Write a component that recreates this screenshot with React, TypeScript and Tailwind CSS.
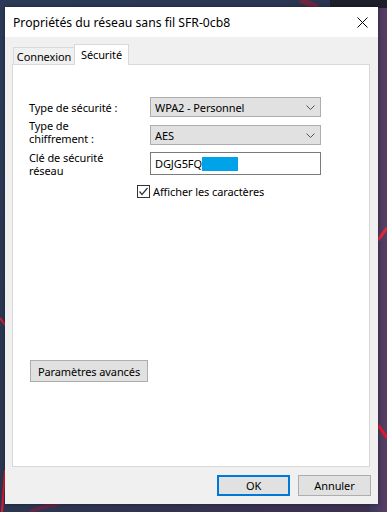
import React from 'react'

const font = { fontFamily: '"Noto Sans", "Liberation Sans", sans-serif' }

function Chevron() {
  return (
    <svg width="9" height="5" viewBox="0 0 9 5" className="text-[#555]">
      <polyline points="0.5,0.5 4.5,4.5 8.5,0.5" fill="none" stroke="currentColor" strokeWidth="1" />
    </svg>
  )
}

function Select({ value }: { value: string }) {
  return (
    <div className="flex h-[20px] w-[171px] items-center justify-between border border-[#adadad] bg-[#e1e1e1] pl-[4px] pr-[5px]">
      <span>{value}</span>
      <Chevron />
    </div>
  )
}

function Backdrop() {
  return (
    <svg className="absolute inset-0" width="387" height="512" viewBox="0 0 387 512">
      <defs>
        <linearGradient id="bg" x1="0" y1="0" x2="1" y2="1">
          <stop offset="0" stopColor="#2b3b57" />
          <stop offset="0.5" stopColor="#2a3550" />
          <stop offset="1" stopColor="#3f3050" />
        </linearGradient>
        <linearGradient id="rs" x1="0" y1="0" x2="1" y2="0">
          <stop offset="0" stopColor="#3a3a5a" />
          <stop offset="1" stopColor="#5a3d64" />
        </linearGradient>
      </defs>
      <rect width="387" height="512" fill="url(#bg)" />
      <rect x="370" y="0" width="17" height="512" fill="url(#rs)" />
      <rect x="330" y="0" width="57" height="8" fill="#1f1f2c" />
      <path d="M300 0 Q310 4 318 8" stroke="#8a1f3c" strokeWidth="6" fill="none" opacity="0.7" />
      <path d="M378 240 L387 228" stroke="#e0283c" strokeWidth="3" fill="none" />
      <path d="M378 425 L387 438" stroke="#e3182e" strokeWidth="3" fill="none" />
      <path d="M0 318 Q3 322 6 326" stroke="#e3182e" strokeWidth="2" fill="none" />
      <path d="M2 512 L5 470" stroke="#e3182e" strokeWidth="2" fill="none" />
      <path d="M30 512 Q45 505 60 504" stroke="#7a2040" strokeWidth="4" fill="none" opacity="0.7" />
    </svg>
  )
}

export default function App() {
  return (
    <div
      className="relative h-[512px] w-[387px] overflow-hidden text-[11px] leading-[15px] tracking-[-0.1px] text-black"
      style={font}
    >
      <Backdrop />
      <div className="relative ml-[5px] flex h-[512px] flex-col pt-[7px]">
        <div className="flex h-[497px] w-[373px] flex-col bg-[#f0f0f0] shadow-[0_0_4px_rgba(0,0,0,0.4)]">
          {/* title bar */}
          <div className="flex h-[30px] items-center justify-between bg-white pl-[8px] pr-[10px]">
            <span className="text-[12.2px] tracking-normal">Propriétés du réseau sans fil SFR-0cb8</span>
            <svg width="11" height="11" viewBox="0 0 11 11">
              <path d="M0.5 0.5 L10.5 10.5 M10.5 0.5 L0.5 10.5" stroke="#000" strokeWidth="1" />
            </svg>
          </div>

          {/* tabs */}
          <div className="ml-[8px] mt-[7px] flex h-[20px] items-end">
            <div className="flex h-[17px] w-[62px] items-center justify-center border border-b-0 border-[#d9d9d9] bg-[#f0f0f0] pt-[1px]">
              Connexion
            </div>
            <div className="relative -ml-px flex h-[21px] w-[55px] translate-y-px items-start justify-center border border-b-0 border-[#d9d9d9] bg-white pt-[2px]">
              Sécurité
            </div>
          </div>

          {/* panel */}
          <div className="ml-[7px] flex h-[403px] w-[358px] flex-col border border-[#d9d9d9] bg-white pl-[16px]">
            <div className="mt-[32px] flex flex-col gap-[8px]">
              <div className="flex items-center">
                <span className="w-[121px]">Type de sécurité :</span>
                <Select value="WPA2 - Personnel" />
              </div>
              <div className="flex h-[20px] items-center">
                <span className="-mt-[7px] w-[121px] leading-[13px]">
                  Type de
                  <br />
                  chiffrement :
                </span>
                <Select value="AES" />
              </div>
            </div>
            <div className="mt-[7px] flex h-[23px] items-center">
              <span className="w-[121px] leading-[13px]">
                Clé de sécurité
                <br />
                réseau
              </span>
              <div className="flex h-[23px] w-[171px] items-center border border-[#7a7a7a] bg-white pl-[4px]">
                <span>DGJG5FQ</span>
                <span className="h-[14px] w-[36px] bg-[#00a2e8]" />
              </div>
            </div>
            <div className="ml-[108px] mt-[10px] flex h-[13px] items-center gap-[3px] leading-[13px]">
              <span className="flex h-[13px] w-[13px] items-center justify-center border border-[#333] bg-white">
                <svg width="11" height="11" viewBox="0 0 11 11">
                  <polyline points="1.5,5.5 4,8.5 9.5,2" fill="none" stroke="#333" strokeWidth="1.2" />
                </svg>
              </span>
              <span>Afficher les caractères</span>
            </div>
            <div className="ml-[1px] mt-[162px] flex h-[22px] w-[118px] items-center justify-center border border-[#adadad] bg-[#e1e1e1]">
              Paramètres avancés
            </div>
          </div>

          {/* footer buttons */}
          <div className="mr-[7px] mt-[8px] flex justify-end gap-[8px]">
            <div className="flex h-[21px] w-[73px] items-center justify-center border-2 border-[#0078d7] bg-[#e1e1e1]">
              OK
            </div>
            <div className="flex h-[21px] w-[73px] items-center justify-center border border-[#adadad] bg-[#e1e1e1]">
              Annuler
            </div>
          </div>
        </div>
      </div>
    </div>
  )
}
